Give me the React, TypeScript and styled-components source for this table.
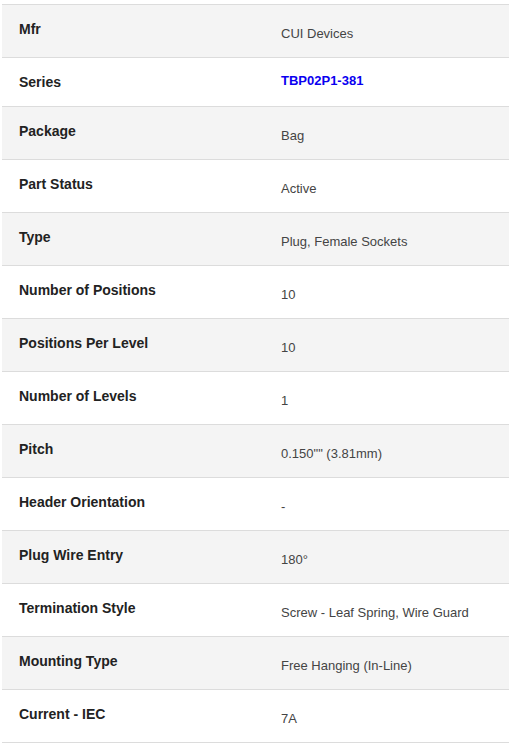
import React from "react";
import styled, { createGlobalStyle } from "styled-components";

const Global = createGlobalStyle`
  html, body { margin: 0; padding: 0; background: #fff; }
  body { font-family: "Liberation Sans", Arial, sans-serif; }
`;

const Page = styled.div`
  padding: 4px 1px 0 2px;
`;

const Table = styled.div`
  width: 507px;
  border-top: 1px solid #dcdcdc;
`;

const Row = styled.div<{ $alt: boolean; $compact?: boolean }>`
  display: grid;
  grid-template-columns: 262px 1fr;
  height: ${(p) => (p.$compact ? 48 : 52)}px;
  background: ${(p) => (p.$alt ? "#f4f4f4" : "#ffffff")};
  border-bottom: 1px solid #dcdcdc;
`;

const Label = styled.div`
  padding: 16px 0 0 17px;
  font-size: 14px;
  line-height: 16px;
  font-weight: bold;
  color: #222;
`;

const Value = styled.div<{ $compact?: boolean }>`
  padding: ${(p) => (p.$compact ? 15 : 21)}px 0 0 17px;
  font-size: 13px;
  line-height: 15px;
  color: #444;
`;

const Link = styled.a`
  color: #0a00f0;
  font-weight: bold;
  text-decoration: none;
`;

type Item = { label: string; value: string; link?: boolean };

const items: Item[] = [
  { label: "Mfr", value: "CUI Devices" },
  { label: "Series", value: "TBP02P1-381", link: true },
  { label: "Package", value: "Bag" },
  { label: "Part Status", value: "Active" },
  { label: "Type", value: "Plug, Female Sockets" },
  { label: "Number of Positions", value: "10" },
  { label: "Positions Per Level", value: "10" },
  { label: "Number of Levels", value: "1" },
  { label: "Pitch", value: "0.150\"\" (3.81mm)" },
  { label: "Header Orientation", value: "-" },
  { label: "Plug Wire Entry", value: "180°" },
  { label: "Termination Style", value: "Screw - Leaf Spring, Wire Guard" },
  { label: "Mounting Type", value: "Free Hanging (In-Line)" },
  { label: "Current - IEC", value: "7A" },
];

export default function App() {
  return (
    <>
      <Global />
      <Page>
        <Table>
          {items.map((it, i) => (
            <Row key={it.label} $alt={i % 2 === 0} $compact={it.link}>
              <Label>{it.label}</Label>
              <Value $compact={it.link}>
                {it.link ? <Link href="#">{it.value}</Link> : it.value}
              </Value>
            </Row>
          ))}
        </Table>
      </Page>
    </>
  );
}
